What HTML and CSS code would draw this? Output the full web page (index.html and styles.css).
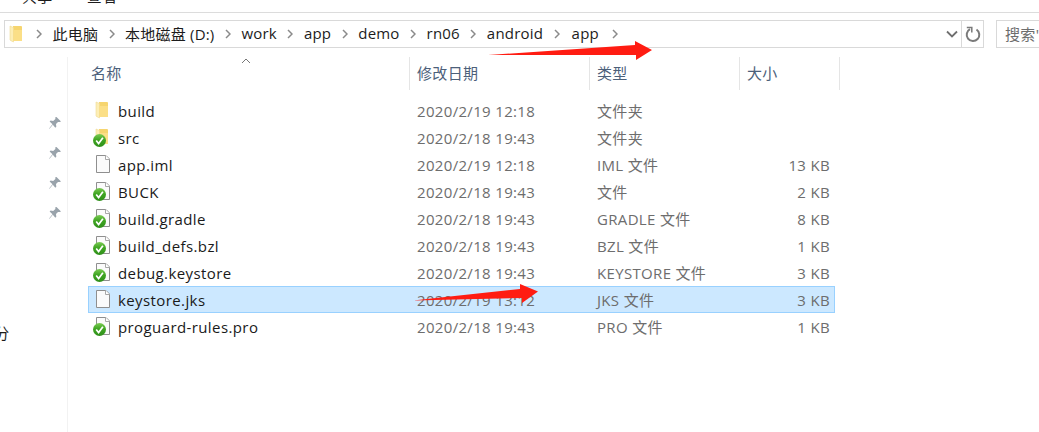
FILE: index.html
```html
<!DOCTYPE html>
<html lang="zh">
<head>
<meta charset="utf-8">
<title>app</title>
<link rel="stylesheet" href="styles.css">
</head>
<body>
<svg class="defs" width="0" height="0" aria-hidden="true">
  <defs>
    <linearGradient id="ball" x1="0" y1="0" x2="0" y2="1">
      <stop offset="0" stop-color="#7ccb55"/>
      <stop offset=".45" stop-color="#3fa522"/>
      <stop offset="1" stop-color="#2f8f1a"/>
    </linearGradient>
    <symbol id="folder" viewBox="0 0 30 27">
      <path d="M11 5h8.500l.5 1v14h-9z" fill="#f6d56f"/>
      <path d="M8 5l3.500 1.500V21L8.500 19.500 8 19z" fill="#fdeeb5" stroke="#eeda96" stroke-width=".6"/>
      <path d="M11.500 9H20v11h-8.500z" fill="#fbdf87"/>
    </symbol>
    <symbol id="file" viewBox="0 0 30 27">
      <path d="M8.500 4.500h9.500l3.500 3.500v13.500h-13z" fill="#fbfbfb" stroke="#8f8f8f"/>
      <path d="M17.500 4.500v4h4" fill="#fff" stroke="#a8a8a8"/>
    </symbol>
    <symbol id="check" viewBox="0 0 30 27">
      <circle cx="11.500" cy="16.500" r="6.500" fill="url(#ball)"/>
      <path d="M8.200 16.500l2.400 3 4.300-5.800" fill="none" stroke="#fff" stroke-width="1.700"/>
    </symbol>
    <symbol id="chev" viewBox="0 0 6 10">
      <path d="M1 1l4 4-4 4" fill="none" stroke="#8a8a8a" stroke-width="1.500"/>
    </symbol>
    <symbol id="pin" viewBox="0 0 14 14">
      <path d="M8.500 1l4.500 4.500-1.300.6-1.700-.2-2 2.200.3 2.600-1 1L4.800 8.800 1.500 12.800l-.4-.4 3.400-4.100L1.600 5.600l1-1 2.600.4 2.200-2.100-.1-1.700z" fill="#99a3ab"/>
    </symbol>
  </defs>
</svg>

<header class="ribbon">
  <span class="tab">共享</span>
  <span class="tab">查看</span>
</header>

<div class="toolbar">
  <nav class="address">
    <svg class="crumb-folder" width="30" height="27"><use href="#folder"/></svg>
    <svg class="chev"><use href="#chev"/></svg>
    <span class="crumb">此电脑</span>
    <svg class="chev"><use href="#chev"/></svg>
    <span class="crumb">本地磁盘 (D:)</span>
    <svg class="chev"><use href="#chev"/></svg>
    <span class="crumb">work</span>
    <svg class="chev"><use href="#chev"/></svg>
    <span class="crumb">app</span>
    <svg class="chev"><use href="#chev"/></svg>
    <span class="crumb">demo</span>
    <svg class="chev"><use href="#chev"/></svg>
    <span class="crumb">rn06</span>
    <svg class="chev"><use href="#chev"/></svg>
    <span class="crumb">android</span>
    <svg class="chev"><use href="#chev"/></svg>
    <span class="crumb crumb-last">app</span>
    <svg class="chev"><use href="#chev"/></svg>
    <div class="addr-end">
      <svg class="drop" width="12" height="8" viewBox="0 0 12 8"><path d="M1 1.500l5 5 5-5" fill="none" stroke="#6f6f6f" stroke-width="1.800"/></svg>
      <div class="refresh">
        <svg width="16" height="17" viewBox="0 0 16 17"><path d="M5 3.200A6.300 6.300 0 1 0 11.500 3.500" fill="none" stroke="#7a7a7a" stroke-width="2"/><path d="M1.800 1.500h5v5" fill="none" stroke="#7a7a7a" stroke-width="1.500"/></svg>
      </div>
    </div>
  </nav>
  <div class="search">搜索"app"</div>
</div>

<div class="content">
  <aside class="side">
    <svg class="pin"><use href="#pin"/></svg>
    <svg class="pin"><use href="#pin"/></svg>
    <svg class="pin"><use href="#pin"/></svg>
    <svg class="pin"><use href="#pin"/></svg>
    <span class="side-label">部分</span>
  </aside>
  <main class="list">
    <div class="head">
      <div class="hcell hname">名称
        <svg class="sort" width="10" height="6" viewBox="0 0 10 6"><path d="M1 5l4-4 4 4" fill="none" stroke="#777" stroke-width="1"/></svg>
      </div>
      <div class="hcell">修改日期</div>
      <div class="hcell">类型</div>
      <div class="hcell">大小</div>
    </div>
    <div class="rows">
      <div class="row"><div class="ic"><svg width="30" height="27"><use href="#folder"/></svg></div><div class="name">build</div><div class="meta">2020/2/19 12:18</div><div class="meta">文件夹</div><div class="meta size"></div></div>
      <div class="row"><div class="ic"><svg width="30" height="27"><use href="#folder"/><use href="#check"/></svg></div><div class="name">src</div><div class="meta">2020/2/18 19:43</div><div class="meta">文件夹</div><div class="meta size"></div></div>
      <div class="row"><div class="ic"><svg width="30" height="27"><use href="#file"/></svg></div><div class="name">app.iml</div><div class="meta">2020/2/19 12:18</div><div class="meta">IML 文件</div><div class="meta size">13 KB</div></div>
      <div class="row"><div class="ic"><svg width="30" height="27"><use href="#file"/><use href="#check"/></svg></div><div class="name">BUCK</div><div class="meta">2020/2/18 19:43</div><div class="meta">文件</div><div class="meta size">2 KB</div></div>
      <div class="row"><div class="ic"><svg width="30" height="27"><use href="#file"/><use href="#check"/></svg></div><div class="name">build.gradle</div><div class="meta">2020/2/18 19:43</div><div class="meta">GRADLE 文件</div><div class="meta size">8 KB</div></div>
      <div class="row"><div class="ic"><svg width="30" height="27"><use href="#file"/><use href="#check"/></svg></div><div class="name">build_defs.bzl</div><div class="meta">2020/2/18 19:43</div><div class="meta">BZL 文件</div><div class="meta size">1 KB</div></div>
      <div class="row"><div class="ic"><svg width="30" height="27"><use href="#file"/><use href="#check"/></svg></div><div class="name">debug.keystore</div><div class="meta">2020/2/18 19:43</div><div class="meta">KEYSTORE 文件</div><div class="meta size">3 KB</div></div>
      <div class="row selected"><div class="ic"><svg width="30" height="27"><use href="#file"/></svg></div><div class="name">keystore.jks</div><div class="meta">2020/2/19 13:12</div><div class="meta">JKS 文件</div><div class="meta size">3 KB</div></div>
      <div class="row"><div class="ic"><svg width="30" height="27"><use href="#file"/><use href="#check"/></svg></div><div class="name">proguard-rules.pro</div><div class="meta">2020/2/18 19:43</div><div class="meta">PRO 文件</div><div class="meta size">1 KB</div></div>
    </div>
  </main>
</div>

<svg class="arrow arrow-top" width="166" height="21" viewBox="0 0 166 21"><path d="M0 14L147 4 147 0 164 9 148 19 148 14z" fill="#ff1c12"/></svg>
<svg class="arrow arrow-row" width="127" height="21" viewBox="0 0 127 21"><path d="M0 16.500L107 5 107 0 125 7.500 109 19 109 14z" fill="#ff1c12"/></svg>
</body>
</html>
```
FILE: styles.css
```css
* { box-sizing: border-box; }
html, body { margin: 0; padding: 0; height: 100%; }
body {
  position: relative;
  width: 1039px;
  height: 432px;
  overflow: hidden;
  background: #fff;
  font-family: "Open Sans", "Noto Sans CJK SC", sans-serif;
  font-size: 15px;
  letter-spacing: .33px;
  color: #1c1c1c;
}
.defs { position: absolute; }

.ribbon {
  display: flex;
  height: 13px;
  border-bottom: 1px solid #dcdcdc;
  overflow: hidden;
  padding-left: 22px;
  gap: 34px;
}
.tab { margin-top: -14px; line-height: 20px; }

.toolbar {
  display: flex;
  margin-top: 7px;
  padding-left: 4px;
  gap: 12px;
}
.address {
  display: flex;
  align-items: center;
  width: 980px;
  height: 28px;
  border: 1px solid #d9d9d9;
  gap: 10.500px;
  letter-spacing: .2px;
  white-space: nowrap;
  flex: none;
}
.crumb { margin-top: -2px; }
.crumb-last { margin: -2px 3px 0 1.500px; }
.crumb-folder { margin: 0 -6.500px 0 -3px; flex: none; }
.chev { width: 6px; height: 10px; flex: none; }
.addr-end { margin-left: auto; display: flex; align-items: center; height: 100%; gap: 3px; }
.refresh {
  display: flex;
  align-items: center;
  justify-content: center;
  width: 22px;
  height: 100%;
  border-left: 1px solid #d9d9d9;
}
.search {
  flex: none;
  width: 80px;
  height: 28px;
  border: 1px solid #d9d9d9;
  padding-left: 8px;
  line-height: 26px;
  color: #6d6d6d;
  white-space: nowrap;
}

.content { display: flex; margin-top: 9px; }
.side {
  display: flex;
  flex-direction: column;
  align-items: flex-end;
  width: 68px;
  height: 375px;
  padding: 51px 5px 0 0;
  border-right: 1px solid #f2f2f2;
  flex: none;
  overflow: hidden;
}
.pin { width: 14px; height: 14px; margin: 8px 0; flex: none; }
.side-label {
  align-self: flex-start;
  margin: 95px 0 0 -21px;
  line-height: 20px;
}

.list { margin-left: 20px; width: 760px; }
.head {
  display: grid;
  grid-template-columns: 322px 180px 150px 100px;
  height: 32px;
}
.hcell {
  position: relative;
  border-right: 1px solid #e5e5e5;
  padding-left: 7px;
  line-height: 33px;
  color: #4c607a;
}
.hname { padding-left: 3px; }
.sort { position: absolute; left: 153px; top: 1px; }

.rows { margin-top: 8px; width: 747px; }
.row {
  display: grid;
  grid-template-columns: 30px 299px 180px 150px 88px;
  grid-template-rows: 27px;
  height: 27px;
  line-height: 27px;
}
.selected {
  background: #cce8ff;
  box-shadow: inset 0 0 0 1px #99d1ff;
}
.ic { height: 27px; }
.ic svg { display: block; }
.name { padding-top: 1px; letter-spacing: .4px; color: #1a1a1a; white-space: nowrap; }
.meta { padding-top: 1px; color: #6d6d6d; white-space: nowrap; }
.size { text-align: right; padding-right: 5px; }

.arrow { position: absolute; }
.arrow-top { left: 488px; top: 41px; }
.arrow-row { left: 413px; top: 284px; }
```
